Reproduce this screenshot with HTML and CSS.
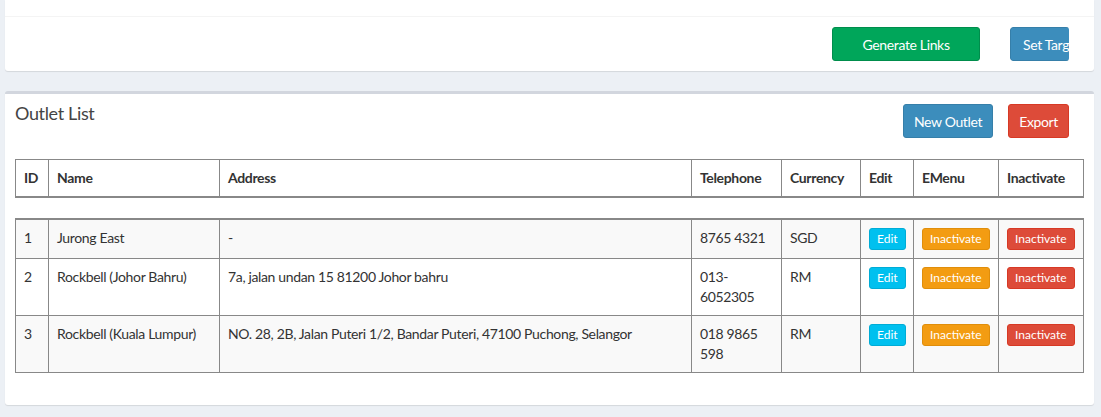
FILE: index.html
```html
<!DOCTYPE html>
<html lang="en">
<head>
    <meta charset="UTF-8">
    <meta name="viewport" content="width=device-width, initial-scale=1.0">
    <title>Outlet List</title>
    <link rel="stylesheet" href="styles.css">
</head>
<body>
    <div class="content">
        <div class="box">
            <div class="box-header-top"></div>
            <div class="box-body actions">
                <button class="btn btn-success btn-wide">Generate Links</button>
                <div class="clip">
                    <button class="btn btn-primary btn-target">Set Target</button>
                </div>
            </div>
        </div>

        <div class="box box-default">
            <div class="box-header">
                <h3 class="box-title">Outlet List</h3>
                <div class="box-tools">
                    <button class="btn btn-primary">New Outlet</button>
                    <button class="btn btn-danger">Export</button>
                </div>
            </div>
            <div class="box-body">
                <table class="table table-head">
                    <colgroup>
                        <col class="c-id"><col class="c-name"><col><col class="c-tel"><col class="c-cur"><col class="c-edit"><col class="c-menu"><col class="c-inact">
                    </colgroup>
                    <thead>
                        <tr>
                            <th>ID</th>
                            <th>Name</th>
                            <th>Address</th>
                            <th>Telephone</th>
                            <th>Currency</th>
                            <th>Edit</th>
                            <th>EMenu</th>
                            <th>Inactivate</th>
                        </tr>
                    </thead>
                </table>
                <table class="table table-rows">
                    <colgroup>
                        <col class="c-id"><col class="c-name"><col><col class="c-tel"><col class="c-cur"><col class="c-edit"><col class="c-menu"><col class="c-inact">
                    </colgroup>
                    <tbody>
                        <tr>
                            <td>1</td>
                            <td>Jurong East</td>
                            <td>-</td>
                            <td>8765 4321</td>
                            <td>SGD</td>
                            <td><button class="btn btn-xs btn-info">Edit</button></td>
                            <td><button class="btn btn-xs btn-warning">Inactivate</button></td>
                            <td><button class="btn btn-xs btn-danger">Inactivate</button></td>
                        </tr>
                        <tr>
                            <td>2</td>
                            <td>Rockbell (Johor Bahru)</td>
                            <td>7a, jalan undan 15 81200 Johor bahru</td>
                            <td>013-6052305</td>
                            <td>RM</td>
                            <td><button class="btn btn-xs btn-info">Edit</button></td>
                            <td><button class="btn btn-xs btn-warning">Inactivate</button></td>
                            <td><button class="btn btn-xs btn-danger">Inactivate</button></td>
                        </tr>
                        <tr>
                            <td>3</td>
                            <td>Rockbell (Kuala Lumpur)</td>
                            <td>NO. 28, 2B, Jalan Puteri 1/2, Bandar Puteri, 47100 Puchong, Selangor</td>
                            <td>018 9865 598</td>
                            <td>RM</td>
                            <td><button class="btn btn-xs btn-info">Edit</button></td>
                            <td><button class="btn btn-xs btn-warning">Inactivate</button></td>
                            <td><button class="btn btn-xs btn-danger">Inactivate</button></td>
                        </tr>
                    </tbody>
                </table>
            </div>
        </div>
    </div>
</body>
</html>
```

FILE: styles.css
```css
* {
    box-sizing: border-box;
}

body {
    margin: 0;
    background-color: #ecf0f5;
    font-family: Lato, "Open Sans", sans-serif;
    font-size: 14px;
    line-height: 20px;
    letter-spacing: -0.35px;
    color: #333;
}

.content {
    padding: 0 7px 0 5px;
}

.box {
    background: #fff;
    border-radius: 0 0 3px 3px;
    box-shadow: 0 1px 1px rgba(0, 0, 0, 0.1);
    margin-bottom: 20px;
}

.box-default {
    border-top: 3px solid #d2d6de;
    border-radius: 3px;
}

.box-header-top {
    height: 17px;
    border-bottom: 1px solid #f4f4f4;
}

.box-body {
    padding: 10px;
}

.actions {
    display: flex;
    justify-content: flex-end;
    gap: 30px;
    padding-right: 25px;
}

.clip {
    width: 59px;
    overflow: hidden;
    border-radius: 3px;
}

.btn {
    display: inline-block;
    height: 34px;
    padding: 0 10px;
    border: 1px solid transparent;
    border-radius: 3px;
    font-family: inherit;
    font-size: 14px;
    letter-spacing: inherit;
    color: #fff;
    white-space: nowrap;
    cursor: pointer;
}

.btn-wide {
    width: 148px;
}

.btn-target {
    width: 90px;
    text-align: left;
    padding-left: 12px;
}

.btn-success {
    background-color: #00a65a;
    border-color: #008d4c;
}

.btn-primary {
    background-color: #3c8dbc;
    border-color: #367fa9;
}

.btn-danger {
    background-color: #dd4b39;
    border-color: #d73925;
}

.btn-warning {
    background-color: #f39c12;
    border-color: #e08e0b;
}

.btn-info {
    background-color: #00c0ef;
    border-color: #00acd6;
}

.box-header {
    display: flex;
    justify-content: space-between;
    align-items: flex-start;
    padding: 10px 25px 0 10px;
}

.box-title {
    margin: 0;
    font-size: 18px;
    font-weight: normal;
    line-height: 18px;
    color: #444;
}

.box-tools {
    display: flex;
    gap: 15px;
}

.box-header + .box-body {
    padding-top: 21px;
    padding-bottom: 32px;
}

.table {
    width: 100%;
    border-collapse: collapse;
    table-layout: fixed;
}

.table th,
.table td {
    border: 1px solid #888;
    padding: 8px;
    text-align: left;
    vertical-align: top;
}

.table th {
    font-weight: bold;
    border-bottom-width: 2px;
    vertical-align: bottom;
}

.table-head {
    margin-bottom: 20px;
}

.table-rows {
    border-top: 2px solid #888;
}

.table-rows tr:nth-child(odd) {
    background-color: #f9f9f9;
}

.c-id { width: 33px; }
.c-name { width: 171px; }
.c-tel { width: 90px; }
.c-cur { width: 79px; }
.c-edit { width: 53px; }
.c-menu { width: 85px; }
.c-inact { width: 85px; }

.btn-xs {
    height: 22px;
    padding: 0 7px;
    font-size: 12px;
    line-height: 18px;
    letter-spacing: 0;
}
```
